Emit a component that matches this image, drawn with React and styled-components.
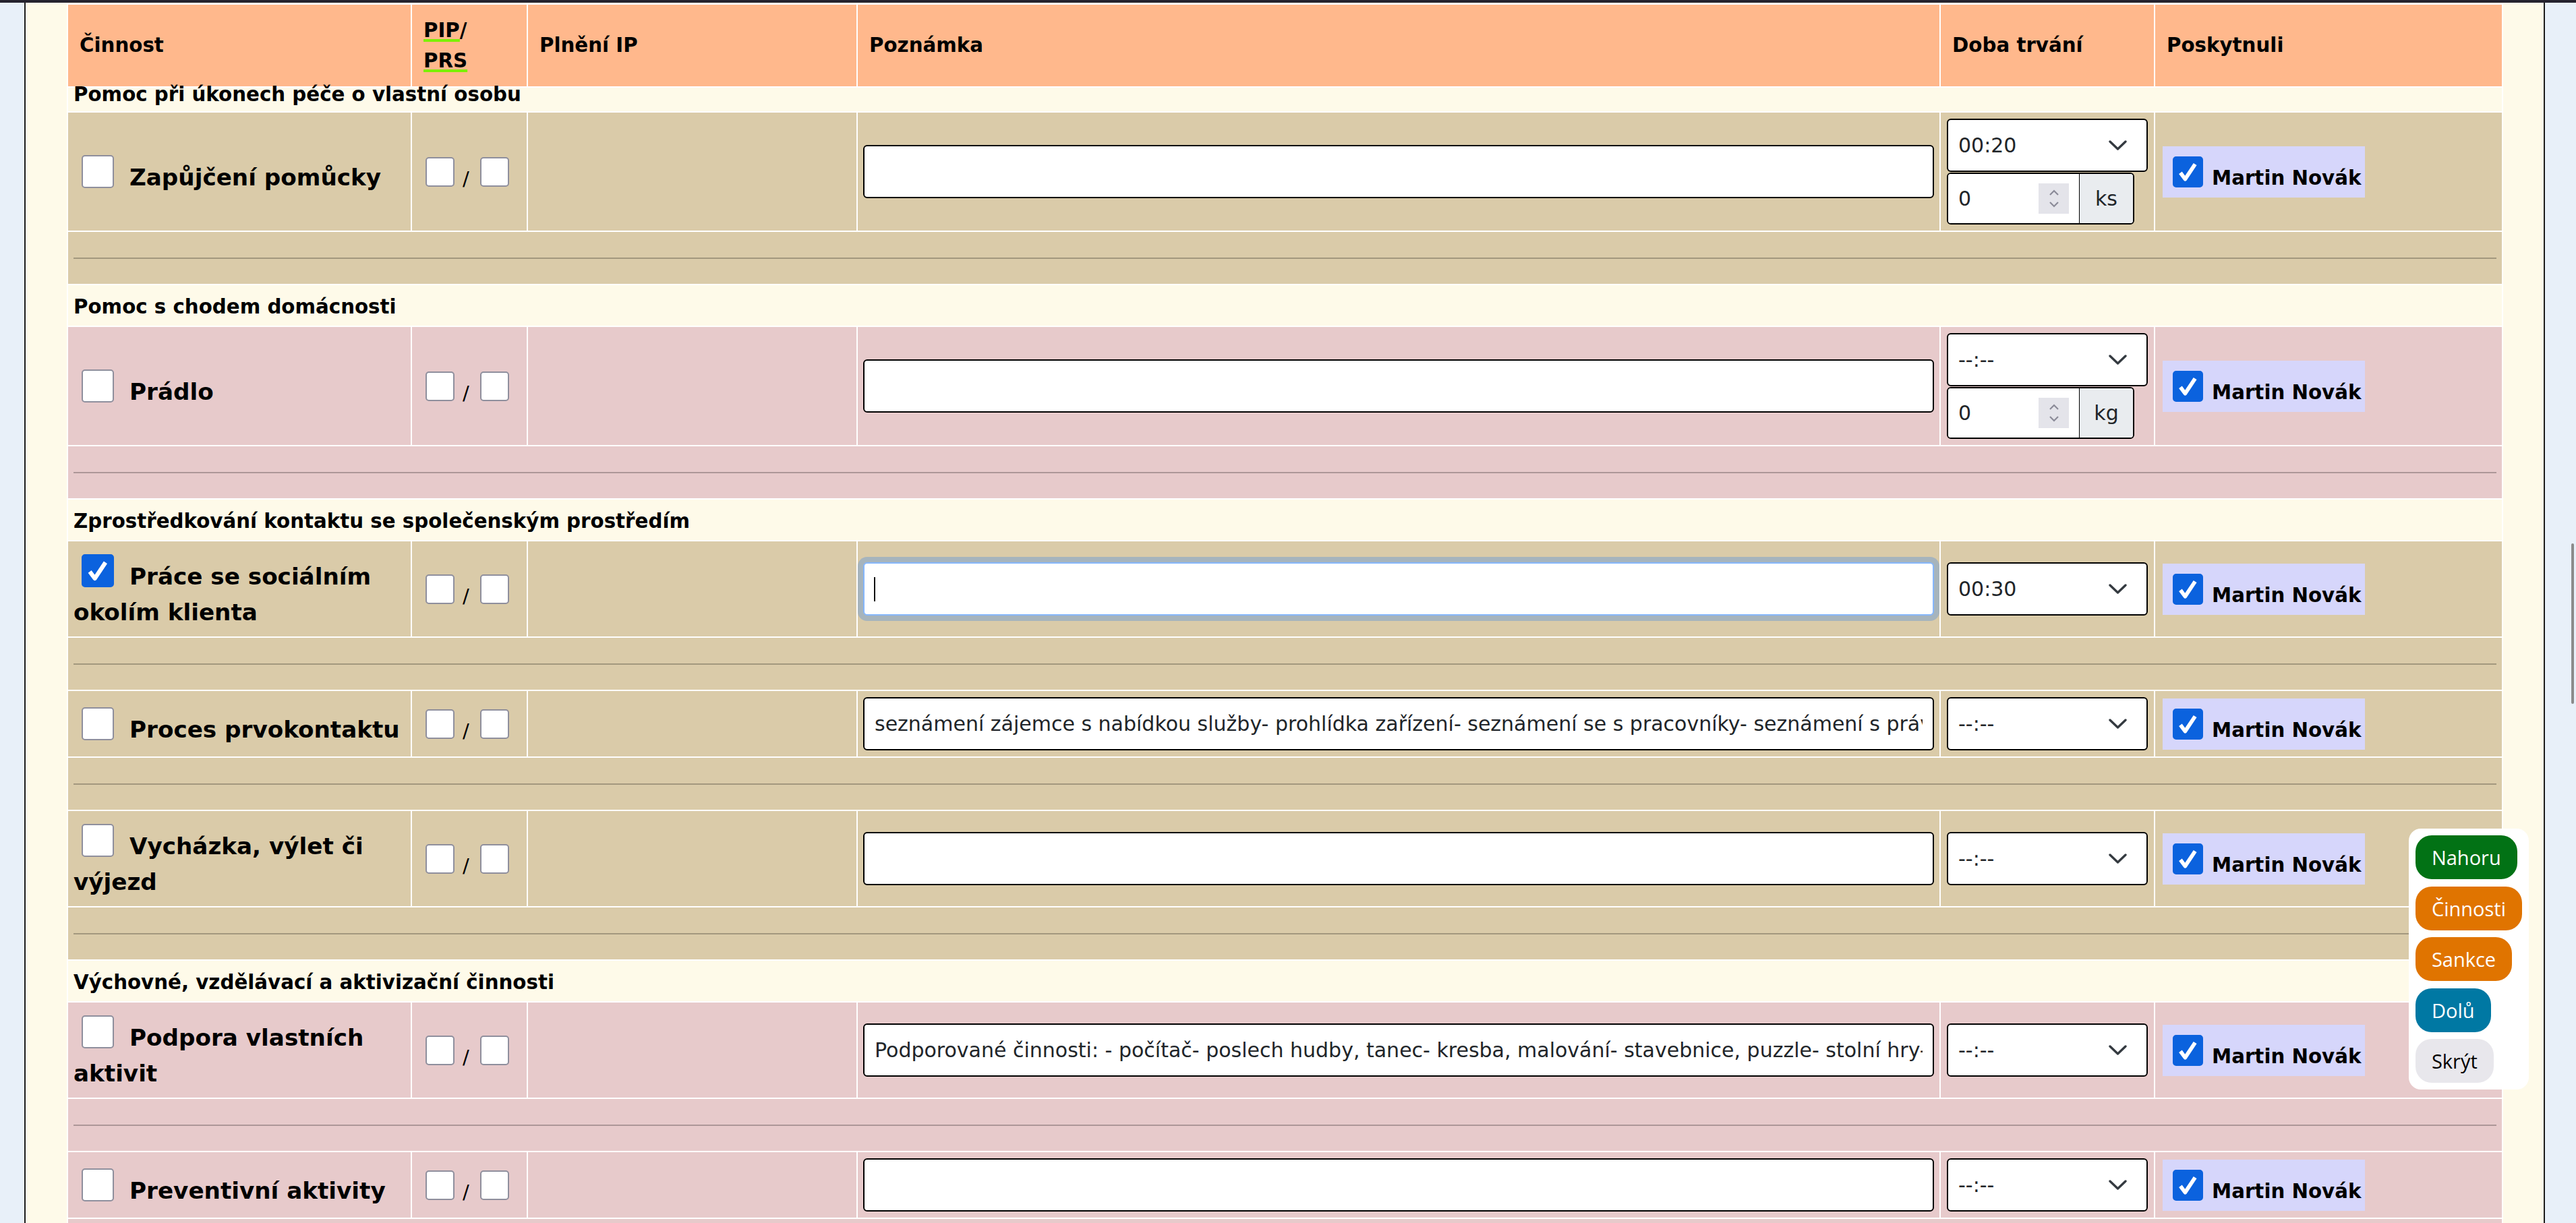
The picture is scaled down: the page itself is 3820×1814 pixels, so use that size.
import React from "react";
import styled, { createGlobalStyle, css } from "styled-components";

const GlobalStyle = createGlobalStyle`
  html, body {
    margin: 0;
    padding: 0;
  }
  body {
    background: #e8f0f9;
    font-family: "DejaVu Sans", Verdana, sans-serif;
    color: #000;
    overflow: hidden;
  }
`;

const tones = {
  tan: "#dacba9",
  pink: "#e7cacb",
};

const columns = [508, 170, 487, 1604, 316, 514];

const timeOptions = ["--:--", "00:05", "00:10", "00:15", "00:20", "00:25", "00:30", "00:45", "01:00"];

const sections = [
  {
    title: "Pomoc při úkonech péče o vlastní osobu",
    peek: true,
    rows: [
      { name: "Zapůjčení pomůcky", tone: "tan", time: "00:20", amount: { value: "0", unit: "ks" } },
    ],
  },
  {
    title: "Pomoc s chodem domácnosti",
    rows: [{ name: "Prádlo", tone: "pink", time: "--:--", amount: { value: "0", unit: "kg" } }],
  },
  {
    title: "Zprostředkování kontaktu se společenským prostředím",
    rows: [
      { name: "Práce se sociálním okolím klienta", tone: "tan", checked: true, time: "00:30", focused: true },
      {
        name: "Proces prvokontaktu",
        tone: "tan",
        time: "--:--",
        note: "seznámení zájemce s nabídkou služby- prohlídka zařízení- seznámení se s pracovníky- seznámení s právy a povinnostmi- podpis smlouvy",
      },
      { name: "Vycházka, výlet či výjezd", tone: "tan", time: "--:--" },
    ],
  },
  {
    title: "Výchovné, vzdělávací a aktivizační činnosti",
    rows: [
      {
        name: "Podpora vlastních aktivit",
        tone: "pink",
        time: "--:--",
        note: "Podporované činnosti: - počítač- poslech hudby, tanec- kresba, malování- stavebnice, puzzle- stolní hry- společenské hry",
      },
      { name: "Preventivní aktivity", tone: "pink", time: "--:--" },
    ],
  },
];

const navItems = [
  { label: "Nahoru", bg: "#027215", fg: "#fff" },
  { label: "Činnosti", bg: "#e07400", fg: "#fff" },
  { label: "Sankce", bg: "#e07400", fg: "#fff" },
  { label: "Dolů", bg: "#0078a3", fg: "#fff" },
  { label: "Skrýt", bg: "#e8e7ec", fg: "#000" },
];

const CheckBox = ({ checked, size, className }) => (
  <Box $checked={checked} $size={size} className={className}>
    {checked && (
      <svg viewBox="0 0 20 20" width="100%" height="100%">
        <path d="M4.6 10.6 L8 15.2 L15.2 4.4" fill="none" stroke="#fff" strokeWidth="2.8" strokeLinejoin="round" />
      </svg>
    )}
  </Box>
);

const Chevron = ({ className }) => (
  <svg className={className} viewBox="0 0 27 15" width="27" height="15">
    <path d="M2 2 L13.5 13 L25 2" fill="none" stroke="#343a40" strokeWidth="3.4" strokeLinecap="round" strokeLinejoin="round" />
  </svg>
);

const Spinner = () => (
  <SpinBox>
    <svg viewBox="0 0 16 10" width="16" height="10">
      <path d="M2 8 L8 2 L14 8" fill="none" stroke="#8b8b98" strokeWidth="2.2" />
    </svg>
    <svg viewBox="0 0 16 10" width="16" height="10">
      <path d="M2 2 L8 8 L14 2" fill="none" stroke="#8b8b98" strokeWidth="2.2" />
    </svg>
  </SpinBox>
);

const ActivityRow = ({ row }) => (
  <>
    <tr>
      <Cell $tone={row.tone}>
        <ActivityLabel>
          <ActivityBox checked={row.checked} size={48} />
          {row.name}
        </ActivityLabel>
      </Cell>
      <Cell $tone={row.tone}>
        <PipWrap>
          <CheckBox size={43} />
          <Slash>/</Slash>
          <CheckBox size={43} />
        </PipWrap>
      </Cell>
      <Cell $tone={row.tone} />
      <Cell $tone={row.tone} $pad="9px 8px 9px 8px">
        <NoteWrap>
          <NoteInput type="text" defaultValue={row.note || ""} $focused={row.focused} />
          {row.focused && <Caret />}
        </NoteWrap>
      </Cell>
      <Cell $tone={row.tone} $pad="9px 9px">
        <SelectWrap>
          <TimeSelect defaultValue={row.time}>
            {timeOptions.map((t) => (
              <option key={t} value={t}>
                {t}
              </option>
            ))}
          </TimeSelect>
          <SelectChevron />
        </SelectWrap>
        {row.amount && (
          <AmountGroup>
            <AmountInput type="text" defaultValue={row.amount.value} />
            <Spinner />
            <Unit>{row.amount.unit}</Unit>
          </AmountGroup>
        )}
      </Cell>
      <Cell $tone={row.tone} $pad="9px 8px 9px 11px">
        <ProvidedLabel>
          <ProvidedBox checked size={45} />
          <ProvidedName>Martin Novák</ProvidedName>
        </ProvidedLabel>
      </Cell>
    </tr>
    <tr>
      <SpacerCell colSpan={6} $tone={row.tone}>
        <Rule />
      </SpacerCell>
    </tr>
  </>
);

export default function App() {
  return (
    <>
      <GlobalStyle />
      <Page>
        <TopBar />
        <Sheet>
          <Table>
            <colgroup>
              {columns.map((w, i) => (
                <Col key={i} $w={w} />
              ))}
            </colgroup>
            <tbody>
              <tr>
                <HeadCell>Činnost</HeadCell>
                <HeadCell>
                  <Marked>PIP</Marked>/<br />
                  <Marked>PRS</Marked>
                </HeadCell>
                <HeadCell>Plnění IP</HeadCell>
                <HeadCell>Poznámka</HeadCell>
                <HeadCell>Doba trvání</HeadCell>
                <HeadCell>Poskytnuli</HeadCell>
              </tr>
              {sections.map((section) => (
                <React.Fragment key={section.title}>
                  <tr>
                    <TitleCell colSpan={6} $peek={section.peek}>
                      {section.title}
                    </TitleCell>
                  </tr>
                  {section.rows.map((row) => (
                    <ActivityRow key={row.name} row={row} />
                  ))}
                </React.Fragment>
              ))}
            </tbody>
          </Table>
        </Sheet>
        <NavPanel>
          {navItems.map((item) => (
            <NavButton key={item.label} $bg={item.bg} $fg={item.fg}>
              {item.label}
            </NavButton>
          ))}
        </NavPanel>
        <ScrollThumb />
      </Page>
    </>
  );
}

const Page = styled.div`
  position: relative;
  width: 3820px;
  height: 1814px;
  overflow: hidden;
`;

const TopBar = styled.div`
  height: 4px;
  background: #25232e;
`;

const Sheet = styled.div`
  margin: 0 46px 0 36px;
  min-height: 1810px;
  box-sizing: border-box;
  padding: 1px 60px 0 61px;
  background: #fefae9;
  border-left: 2px solid #1d1d1d;
  border-right: 2px solid #1d1d1d;
`;

const Table = styled.table`
  width: 100%;
  table-layout: fixed;
  border-collapse: separate;
  border-spacing: 2px;
  background: #fff;
  font-family: "DejaVu Sans", Verdana, sans-serif;
`;

const Col = styled.col`
  width: ${(p) => p.$w}px;
`;

const HeadCell = styled.th`
  height: 121px;
  padding: 0 17px;
  background: #ffb88c;
  text-align: left;
  vertical-align: middle;
  font-size: 29.3px;
  font-weight: bold;
  line-height: 45px;
`;

const Marked = styled.span`
  text-decoration: underline;
  text-decoration-color: #7cf000;
  text-decoration-thickness: 4px;
  text-underline-offset: 3px;
`;

const TitleCell = styled.td`
  background: #fefae9;
  padding: 10px 8px 6px;
  font-size: 29.3px;
  font-weight: bold;
  line-height: 44px;
  vertical-align: middle;
  ${(p) =>
    p.$peek &&
    css`
      height: 35px;
      padding: 0 8px;
      line-height: 20px;
      vertical-align: top;
    `}
`;

const Cell = styled.td`
  background: ${(p) => tones[p.$tone]};
  padding: ${(p) => p.$pad || "9px 8px"};
  vertical-align: middle;
`;

const SpacerCell = styled.td`
  height: 77px;
  padding: 0 8px;
  background: ${(p) => tones[p.$tone]};
  vertical-align: middle;
`;

const Rule = styled.div`
  border-top: 2px solid rgba(0, 0, 0, 0.25);
`;

const Box = styled.span`
  display: inline-block;
  box-sizing: border-box;
  width: ${(p) => p.$size}px;
  height: ${(p) => p.$size + 1}px;
  border: 2px solid ${(p) => (p.$checked ? "#0b62de" : "#8f8f9d")};
  border-radius: 5px;
  background: ${(p) => (p.$checked ? "#0b62de" : "#fff")};
  flex-shrink: 0;

  svg {
    display: block;
  }
`;

const ActivityLabel = styled.div`
  font-size: 34.2px;
  font-weight: bold;
  line-height: 53px;
`;

const ActivityBox = styled(CheckBox)`
  margin: 10px 23px 0 12px;
  vertical-align: -4px;
`;

const PipWrap = styled.div`
  display: flex;
  align-items: flex-end;
  padding-left: 12px;
`;

const Slash = styled.span`
  font-size: 29px;
  line-height: 1;
  margin: 0 16px -3px 12px;
`;

const NoteWrap = styled.div`
  position: relative;
`;

const NoteInput = styled.input`
  display: block;
  width: 100%;
  height: 79px;
  box-sizing: border-box;
  padding: 0 15px;
  border: 2px solid #000;
  border-radius: 6px;
  background: #fff;
  color: #212529;
  font-family: "DejaVu Sans", Verdana, sans-serif;
  font-size: 30px;
  outline: none;
  ${(p) =>
    p.$focused &&
    css`
      border-color: #86b7fe;
      box-shadow: 0 0 0 8px rgba(13, 110, 253, 0.25);
    `}
`;

const Caret = styled.span`
  position: absolute;
  left: 16px;
  top: 22px;
  width: 2px;
  height: 36px;
  background: #111;
`;

const SelectWrap = styled.div`
  position: relative;
`;

const TimeSelect = styled.select`
  display: block;
  width: 100%;
  height: 79px;
  box-sizing: border-box;
  padding: 0 15px;
  appearance: none;
  border: 2px solid #000;
  border-radius: 6px;
  background: #fff;
  color: #212529;
  font-family: "DejaVu Sans", Verdana, sans-serif;
  font-size: 30px;
  outline: none;
`;

const SelectChevron = styled(Chevron)`
  position: absolute;
  right: 31px;
  top: 32px;
  pointer-events: none;
`;

const AmountGroup = styled.div`
  display: flex;
  align-items: center;
  width: 278px;
  height: 77px;
  margin-top: 1px;
  box-sizing: border-box;
  border: 2px solid #000;
  border-radius: 6px;
  overflow: hidden;
  background: #fff;
`;

const AmountInput = styled.input`
  flex: 1;
  min-width: 0;
  height: 100%;
  box-sizing: border-box;
  padding: 0 15px;
  border: none;
  background: #fff;
  color: #212529;
  font-family: "DejaVu Sans", Verdana, sans-serif;
  font-size: 30px;
  outline: none;
`;

const SpinBox = styled.span`
  display: flex;
  flex-direction: column;
  align-items: center;
  justify-content: center;
  gap: 7px;
  width: 45px;
  height: 45px;
  margin-right: 15px;
  flex-shrink: 0;
  background: #e4e4ea;
`;

const Unit = styled.span`
  display: flex;
  align-items: center;
  justify-content: center;
  width: 79px;
  height: 100%;
  flex-shrink: 0;
  border-left: 1px solid #000;
  background: #e9ecef;
  color: #212529;
  font-size: 30px;
`;

const ProvidedLabel = styled.label`
  display: inline-flex;
  align-items: flex-end;
  padding: 15px 6px 15px 15px;
  background: #d6d6fb;
  font-size: 29.3px;
  font-weight: bold;
`;

const ProvidedBox = styled(CheckBox)`
  margin-right: 13px;
`;

const ProvidedName = styled.span`
  line-height: 1;
  margin-bottom: -2px;
  white-space: nowrap;
`;

const NavPanel = styled.div`
  position: absolute;
  top: 1229px;
  right: 70px;
  display: flex;
  flex-direction: column;
  align-items: flex-start;
  gap: 10.5px;
  padding: 10px;
  border-radius: 18px;
  background: #fff;
`;

const NavButton = styled.button`
  padding: 15px 24px;
  border: none;
  border-radius: 24px;
  background: ${(p) => p.$bg};
  color: ${(p) => p.$fg};
  font-family: "Open Sans", "Noto Sans", sans-serif;
  font-size: 29px;
  line-height: 35px;
  cursor: pointer;
`;

const ScrollThumb = styled.div`
  position: absolute;
  left: 3813px;
  top: 806px;
  width: 4px;
  height: 238px;
  border-radius: 2px;
  background: #8b8b8b;
`;
